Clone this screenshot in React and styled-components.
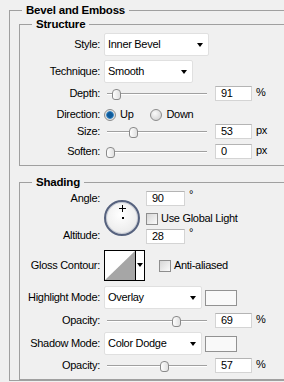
import React from "react";
import styled, { createGlobalStyle } from "styled-components";

const line = "#a0a0a0";

const GlobalStyle = createGlobalStyle`
  html, body {
    margin: 0;
    padding: 0;
    background: #f0f0f0;
    overflow: hidden;
  }
  body {
    font-family: "Liberation Sans", Arial, sans-serif;
    font-size: 11px;
    line-height: 13px;
    letter-spacing: -0.3px;
    color: #000;
  }
`;

const Panel = styled.div`
  width: 330px;
  padding: 4px 0 0 9px;
`;

// group box built from a heading rule and a three-sided frame
const Group = styled.section`
  margin-top: ${props => props.$mt || 0}px;
`;

const Head = styled.div`
  display: flex;
  align-items: center;
  height: 13px;
  font-weight: bold;
  font-size: 11.5px;
  letter-spacing: -0.2px;
  &::before,
  &::after {
    content: "";
    height: 1px;
    background: ${line};
  }
  &::before {
    width: 13px;
  }
  &::after {
    flex: 1;
  }
  span {
    padding: 0 4px;
  }
`;

const Frame = styled.div`
  margin-top: -7px;
  border: 1px solid ${line};
  border-top: 0;
  padding: ${props => props.$pt || 0}px 0 ${props => props.$pb || 0}px
    ${props => props.$pl || 0}px;
  display: flex;
  flex-direction: column;
`;

const Row = styled.div`
  display: flex;
  align-items: center;
  height: ${props => props.$h}px;
  margin-top: ${props => props.$mt || 0}px;
  flex: none;
`;

const Label = styled.div`
  width: 80px;
  padding-right: 4px;
  text-align: right;
  flex: none;
  white-space: nowrap;
`;

const Select = styled.div`
  width: ${props => props.$w}px;
  height: 23px;
  box-sizing: border-box;
  background: #fff;
  border: 1px solid #e0e0e0;
  border-radius: 2px;
  display: flex;
  align-items: center;
  padding-left: 3px;
  position: relative;
  flex: none;
  &::after {
    content: "";
    position: absolute;
    right: 5px;
    top: 9px;
    border-left: 3.5px solid transparent;
    border-right: 3.5px solid transparent;
    border-top: 4px solid #000;
  }
`;

const Track = styled.div`
  width: 100px;
  height: 15px;
  margin-left: 3px;
  position: relative;
  flex: none;
  &::before {
    content: "";
    position: absolute;
    left: 0;
    right: 0;
    top: 7px;
    height: 1px;
    background: ${line};
    box-shadow: 0 1px 0 #fff;
  }
`;

const Thumb = styled.div`
  position: absolute;
  top: 3px;
  width: 9px;
  height: 11px;
  margin-left: -4px;
  box-sizing: border-box;
  border: 1px solid #8a8a8a;
  border-radius: 4px 4px 3px 3px;
  background: linear-gradient(to right, #fefefe, #e0e0e0);
`;

const Field = styled.div`
  width: ${props => props.$w || 37}px;
  height: 15px;
  box-sizing: border-box;
  background: #fff;
  border: 1px solid #d4d4d4;
  border-top-color: #b4b4b4;
  margin-left: ${props => props.$ml || 0}px;
  margin-top: ${props => props.$mt || 0}px;
  padding-left: 5px;
  display: flex;
  align-items: center;
  flex: none;
`;

const Unit = styled.span`
  margin-left: 4px;
  position: relative;
  top: ${props => (props.$up ? -4 : -1)}px;
`;

const Radio = styled.span`
  width: 12px;
  height: 12px;
  border-radius: 50%;
  box-sizing: border-box;
  border: 1px solid #8c8c8c;
  background: ${props =>
    props.$on
      ? "radial-gradient(circle, #0f5a9a 0 2.5px, #3d8cc8 3.5px, #dedede 4.2px, #f4f4f4)"
      : "radial-gradient(circle at 40% 35%, #fafafa, #cbcbcb)"};
  margin-right: 4px;
  flex: none;
`;

const Choice = styled.label`
  display: flex;
  align-items: center;
  margin-right: ${props => props.$mr || 0}px;
  margin-left: ${props => props.$ml || 0}px;
`;

const Check = styled.span`
  width: 12px;
  height: 12px;
  box-sizing: border-box;
  border: 1px solid #8e8e8e;
  background: linear-gradient(135deg, #d6d6d6, #fbfbfb);
  margin-right: 3px;
  flex: none;
`;

const Swatch = styled.div`
  width: 32px;
  height: 16px;
  box-sizing: border-box;
  border: 1px solid #929292;
  background: #f9f9f9;
  margin-left: 3px;
  flex: none;
`;

const AngleBlock = styled.div`
  display: flex;
  height: 56px;
  flex: none;
`;

const LabelCol = styled.div`
  width: 80px;
  padding: 2px 4px 4px 0;
  text-align: right;
  display: flex;
  flex-direction: column;
  justify-content: space-between;
  flex: none;
`;

const Dial = styled.div`
  width: 36px;
  height: 36px;
  box-sizing: border-box;
  border: 2px solid #56627e;
  box-shadow: inset 0 0 0 1px #c9cdd6;
  border-radius: 50%;
  background: radial-gradient(circle at 45% 40%, #ffffff, #e4e4e4);
  margin-top: 10px;
  flex: none;
  position: relative;
`;

const Dot = styled.span`
  position: absolute;
  left: 16px;
  top: 15px;
  width: 2px;
  height: 2px;
  background: #000;
`;

const Cross = styled.span`
  position: absolute;
  left: 13px;
  top: 3px;
  width: 7px;
  height: 7px;
  &::before,
  &::after {
    content: "";
    position: absolute;
    background: #000;
  }
  &::before {
    left: 3px;
    top: 0;
    width: 1px;
    height: 7px;
  }
  &::after {
    left: 0;
    top: 3px;
    width: 7px;
    height: 1px;
  }
`;

const AngleCol = styled.div`
  display: flex;
  flex-direction: column;
  margin-left: 6px;
`;

const Contour = styled.div`
  display: flex;
  width: 41px;
  height: 31px;
  box-sizing: border-box;
  border: 1px solid #000;
  background: #fff;
  flex: none;
`;

const ContourArrow = styled.div`
  flex: 1;
  border-left: 1px solid #000;
  position: relative;
  &::after {
    content: "";
    position: absolute;
    left: 1px;
    top: 12px;
    border-left: 3px solid transparent;
    border-right: 3px solid transparent;
    border-top: 4px solid #000;
  }
`;

const Slider = ({ label, pos, value, unit }) => (
  <>
    <Label>{label}</Label>
    <Track>
      <Thumb style={{ left: pos }} />
    </Track>
    <Field $ml={8}>{value}</Field>
    <Unit>{unit}</Unit>
  </>
);

export default function App() {
  return (
    <>
      <GlobalStyle />
      <Panel>
        <Group>
          <Head>
            <span>Bevel and Emboss</span>
          </Head>
          <Frame $pt={8} $pl={9}>
            <Group>
              <Head>
                <span>Structure</span>
              </Head>
              <Frame $pt={8} $pb={6}>
                <Row $h={25}>
                  <Label>Style:</Label>
                  <Select $w={105}>Inner Bevel</Select>
                </Row>
                <Row $h={29}>
                  <Label>Technique:</Label>
                  <Select $w={89}>Smooth</Select>
                </Row>
                <Row $h={15}>
                  <Slider label="Depth:" pos={9} value="91" unit="%" />
                </Row>
                <Row $h={15} $mt={6}>
                  <Label>Direction:</Label>
                  <Choice $mr={17}>
                    <Radio $on />
                    Up
                  </Choice>
                  <Choice>
                    <Radio />
                    Down
                  </Choice>
                </Row>
                <Row $h={15} $mt={2}>
                  <Slider label="Size:" pos={26} value="53" unit="px" />
                </Row>
                <Row $h={15} $mt={5}>
                  <Slider label="Soften:" pos={3} value="0" unit="px" />
                </Row>
              </Frame>
            </Group>

            <Group $mt={10}>
              <Head>
                <span>Shading</span>
              </Head>
              <Frame $pt={8} $pb={5}>
                <AngleBlock>
                  <LabelCol>
                    <span>Angle:</span>
                    <span>Altitude:</span>
                  </LabelCol>
                  <Dial>
                    <Cross />
                    <Dot />
                  </Dial>
                  <AngleCol>
                    <Row $h={15} $mt={1}>
                      <Field $w={39}>90</Field>
                      <Unit $up>°</Unit>
                    </Row>
                    <Row $h={17} $mt={4}>
                      <Choice>
                        <Check />
                        Use Global Light
                      </Choice>
                    </Row>
                    <Row $h={15} $mt={2}>
                      <Field $w={39}>28</Field>
                      <Unit $up>°</Unit>
                    </Row>
                  </AngleCol>
                </AngleBlock>
                <Row $h={39}>
                  <Label>Gloss Contour:</Label>
                  <Contour>
                    <svg width="30" height="29" viewBox="0 0 30 29">
                      <polygon points="0,29 30,0 30,29" fill="#a6a6a6" />
                    </svg>
                    <ContourArrow />
                  </Contour>
                  <Choice $ml={14}>
                    <Check />
                    Anti-aliased
                  </Choice>
                </Row>
                <Row $h={25}>
                  <Label>Highlight Mode:</Label>
                  <Select $w={98}>Overlay</Select>
                  <Swatch />
                </Row>
                <Row $h={20}>
                  <Slider label="Opacity:" pos={69} value="69" unit="%" />
                </Row>
                <Row $h={27}>
                  <Label>Shadow Mode:</Label>
                  <Select $w={98}>Color Dodge</Select>
                  <Swatch />
                </Row>
                <Row $h={17}>
                  <Slider label="Opacity:" pos={57} value="57" unit="%" />
                </Row>
              </Frame>
            </Group>
          </Frame>
        </Group>
      </Panel>
    </>
  );
}
